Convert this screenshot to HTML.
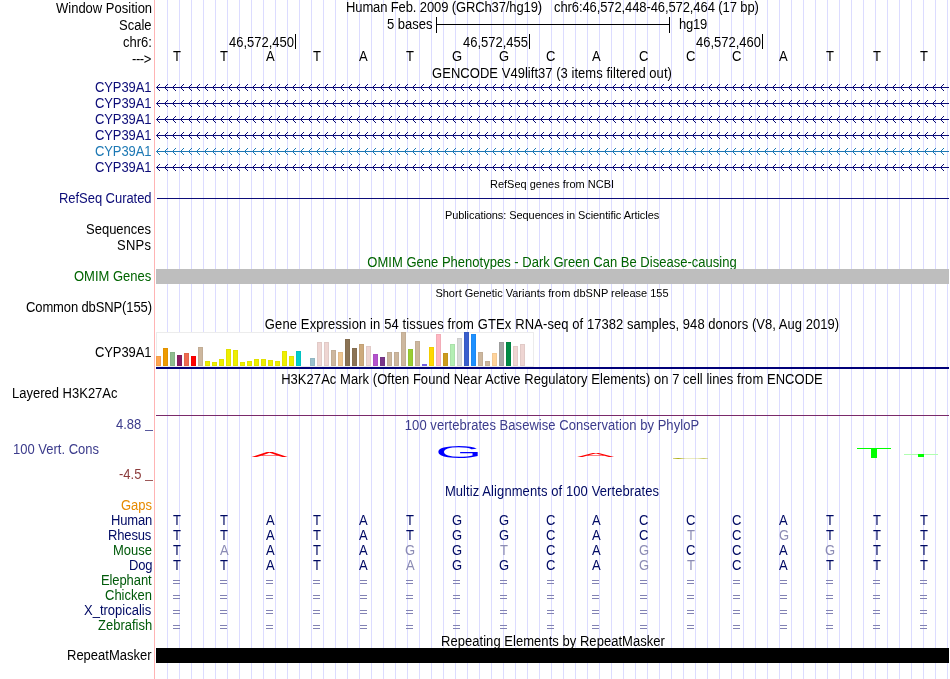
<!DOCTYPE html><html><head><meta charset="utf-8"><title>UCSC Genome Browser</title><style>
html,body{margin:0;padding:0;background:#fff;}
body{width:950px;height:679px;position:relative;overflow:hidden;font-family:"Liberation Sans", sans-serif;}
.t{position:absolute;white-space:pre;font-size:13px;line-height:16px;height:16px;transform:scaleY(1.06);transform-origin:0 12.5px;will-change:transform;}
.b{position:absolute;}
svg{position:absolute;left:0;top:0;}
</style></head><body>
<svg width="950" height="679" shape-rendering="crispEdges"><g fill="#dcdcff"><rect x="167" y="0" width="1" height="679"/><rect x="179" y="0" width="1" height="679"/><rect x="191" y="0" width="1" height="679"/><rect x="203" y="0" width="1" height="679"/><rect x="215" y="0" width="1" height="679"/><rect x="227" y="0" width="1" height="679"/><rect x="239" y="0" width="1" height="679"/><rect x="251" y="0" width="1" height="679"/><rect x="263" y="0" width="1" height="679"/><rect x="275" y="0" width="1" height="679"/><rect x="287" y="0" width="1" height="679"/><rect x="299" y="0" width="1" height="679"/><rect x="311" y="0" width="1" height="679"/><rect x="323" y="0" width="1" height="679"/><rect x="335" y="0" width="1" height="679"/><rect x="347" y="0" width="1" height="679"/><rect x="359" y="0" width="1" height="679"/><rect x="371" y="0" width="1" height="679"/><rect x="383" y="0" width="1" height="679"/><rect x="395" y="0" width="1" height="679"/><rect x="407" y="0" width="1" height="679"/><rect x="419" y="0" width="1" height="679"/><rect x="431" y="0" width="1" height="679"/><rect x="443" y="0" width="1" height="679"/><rect x="455" y="0" width="1" height="679"/><rect x="467" y="0" width="1" height="679"/><rect x="479" y="0" width="1" height="679"/><rect x="491" y="0" width="1" height="679"/><rect x="503" y="0" width="1" height="679"/><rect x="515" y="0" width="1" height="679"/><rect x="527" y="0" width="1" height="679"/><rect x="539" y="0" width="1" height="679"/><rect x="551" y="0" width="1" height="679"/><rect x="563" y="0" width="1" height="679"/><rect x="575" y="0" width="1" height="679"/><rect x="587" y="0" width="1" height="679"/><rect x="599" y="0" width="1" height="679"/><rect x="611" y="0" width="1" height="679"/><rect x="623" y="0" width="1" height="679"/><rect x="635" y="0" width="1" height="679"/><rect x="647" y="0" width="1" height="679"/><rect x="659" y="0" width="1" height="679"/><rect x="671" y="0" width="1" height="679"/><rect x="683" y="0" width="1" height="679"/><rect x="695" y="0" width="1" height="679"/><rect x="707" y="0" width="1" height="679"/><rect x="719" y="0" width="1" height="679"/><rect x="731" y="0" width="1" height="679"/><rect x="743" y="0" width="1" height="679"/><rect x="755" y="0" width="1" height="679"/><rect x="767" y="0" width="1" height="679"/><rect x="779" y="0" width="1" height="679"/><rect x="791" y="0" width="1" height="679"/><rect x="803" y="0" width="1" height="679"/><rect x="815" y="0" width="1" height="679"/><rect x="827" y="0" width="1" height="679"/><rect x="839" y="0" width="1" height="679"/><rect x="851" y="0" width="1" height="679"/><rect x="863" y="0" width="1" height="679"/><rect x="875" y="0" width="1" height="679"/><rect x="887" y="0" width="1" height="679"/><rect x="899" y="0" width="1" height="679"/><rect x="911" y="0" width="1" height="679"/><rect x="923" y="0" width="1" height="679"/><rect x="935" y="0" width="1" height="679"/><rect x="947" y="0" width="1" height="679"/></g>
<rect x="154" y="0" width="1" height="679" fill="#ffb4b4"/>
</svg>
<div class="t" style="right:798.00px;top:1px;color:#000;">Window Position</div>
<div class="t" style="right:798.00px;top:18px;color:#000;">Scale</div>
<div class="t" style="right:798.00px;top:35px;color:#000;">chr6:</div>
<div class="t" style="right:799.40px;top:52px;color:#000;letter-spacing:-0.4px;">---&gt;</div>
<div class="t" style="left:346px;top:0px;color:#000;letter-spacing:-0.12px;">Human Feb. 2009 (GRCh37/hg19)</div>
<div class="t" style="left:554.2px;top:0px;color:#000;letter-spacing:-0.1px;">chr6:46,572,448-46,572,464 (17 bp)</div>
<div class="t" style="right:517.00px;top:17px;color:#000;">5 bases</div>
<div class="t" style="left:678.8px;top:17px;color:#000;letter-spacing:-0.2px;">hg19</div>
<div class="b" style="left:436px;top:24px;width:234px;height:1px;background:#000"></div>
<div class="b" style="left:436px;top:17px;width:1px;height:16px;background:#000"></div>
<div class="b" style="left:669px;top:17px;width:1px;height:16px;background:#000"></div>
<div class="t" style="right:656.00px;top:35px;color:#000;">46,572,450</div>
<div class="b" style="left:295px;top:34px;width:1px;height:15px;background:#000"></div>
<div class="t" style="right:422.00px;top:35px;color:#000;">46,572,455</div>
<div class="b" style="left:529px;top:34px;width:1px;height:15px;background:#000"></div>
<div class="t" style="right:189.00px;top:35px;color:#000;">46,572,460</div>
<div class="b" style="left:762px;top:34px;width:1px;height:15px;background:#000"></div>
<div class="t" style="left:173px;top:49px;color:#000;">T</div>
<div class="t" style="left:220px;top:49px;color:#000;">T</div>
<div class="t" style="left:266px;top:49px;color:#000;">A</div>
<div class="t" style="left:313px;top:49px;color:#000;">T</div>
<div class="t" style="left:359px;top:49px;color:#000;">A</div>
<div class="t" style="left:406px;top:49px;color:#000;">T</div>
<div class="t" style="left:452px;top:49px;color:#000;">G</div>
<div class="t" style="left:499px;top:49px;color:#000;">G</div>
<div class="t" style="left:546px;top:49px;color:#000;">C</div>
<div class="t" style="left:592px;top:49px;color:#000;">A</div>
<div class="t" style="left:639px;top:49px;color:#000;">C</div>
<div class="t" style="left:686px;top:49px;color:#000;">C</div>
<div class="t" style="left:732px;top:49px;color:#000;">C</div>
<div class="t" style="left:779px;top:49px;color:#000;">A</div>
<div class="t" style="left:826px;top:49px;color:#000;">T</div>
<div class="t" style="left:873px;top:49px;color:#000;">T</div>
<div class="t" style="left:920px;top:49px;color:#000;">T</div>
<div class="t" style="left:152.12px;width:800px;text-align:center;top:66px;color:#000;letter-spacing:0.035px;">GENCODE V49lift37 (3 items filtered out)</div>
<div class="t" style="right:799.10px;top:80px;color:#0c0c78;letter-spacing:-0.1px;">CYP39A1</div>
<div class="t" style="right:799.10px;top:96px;color:#0c0c78;letter-spacing:-0.1px;">CYP39A1</div>
<div class="t" style="right:799.10px;top:112px;color:#0c0c78;letter-spacing:-0.1px;">CYP39A1</div>
<div class="t" style="right:799.10px;top:128px;color:#0c0c78;letter-spacing:-0.1px;">CYP39A1</div>
<div class="t" style="right:799.10px;top:144px;color:#1c78b4;letter-spacing:-0.1px;">CYP39A1</div>
<div class="t" style="right:799.10px;top:160px;color:#0c0c78;letter-spacing:-0.1px;">CYP39A1</div>
<svg width="950" height="679"><g stroke="#0c0c78" fill="none" stroke-width="1"><path d="M156.5 87.5H949"/><path d="M160.0 84L156.5 87.5L160.0 91M168.0 84L164.5 87.5L168.0 91M176.0 84L172.5 87.5L176.0 91M184.0 84L180.5 87.5L184.0 91M192.0 84L188.5 87.5L192.0 91M200.0 84L196.5 87.5L200.0 91M208.0 84L204.5 87.5L208.0 91M216.0 84L212.5 87.5L216.0 91M224.0 84L220.5 87.5L224.0 91M232.0 84L228.5 87.5L232.0 91M240.0 84L236.5 87.5L240.0 91M248.0 84L244.5 87.5L248.0 91M256.0 84L252.5 87.5L256.0 91M264.0 84L260.5 87.5L264.0 91M272.0 84L268.5 87.5L272.0 91M280.0 84L276.5 87.5L280.0 91M288.0 84L284.5 87.5L288.0 91M296.0 84L292.5 87.5L296.0 91M304.0 84L300.5 87.5L304.0 91M312.0 84L308.5 87.5L312.0 91M320.0 84L316.5 87.5L320.0 91M328.0 84L324.5 87.5L328.0 91M336.0 84L332.5 87.5L336.0 91M344.0 84L340.5 87.5L344.0 91M352.0 84L348.5 87.5L352.0 91M360.0 84L356.5 87.5L360.0 91M368.0 84L364.5 87.5L368.0 91M376.0 84L372.5 87.5L376.0 91M384.0 84L380.5 87.5L384.0 91M392.0 84L388.5 87.5L392.0 91M400.0 84L396.5 87.5L400.0 91M408.0 84L404.5 87.5L408.0 91M416.0 84L412.5 87.5L416.0 91M424.0 84L420.5 87.5L424.0 91M432.0 84L428.5 87.5L432.0 91M440.0 84L436.5 87.5L440.0 91M448.0 84L444.5 87.5L448.0 91M456.0 84L452.5 87.5L456.0 91M464.0 84L460.5 87.5L464.0 91M472.0 84L468.5 87.5L472.0 91M480.0 84L476.5 87.5L480.0 91M488.0 84L484.5 87.5L488.0 91M496.0 84L492.5 87.5L496.0 91M504.0 84L500.5 87.5L504.0 91M512.0 84L508.5 87.5L512.0 91M520.0 84L516.5 87.5L520.0 91M528.0 84L524.5 87.5L528.0 91M536.0 84L532.5 87.5L536.0 91M544.0 84L540.5 87.5L544.0 91M552.0 84L548.5 87.5L552.0 91M560.0 84L556.5 87.5L560.0 91M568.0 84L564.5 87.5L568.0 91M576.0 84L572.5 87.5L576.0 91M584.0 84L580.5 87.5L584.0 91M592.0 84L588.5 87.5L592.0 91M600.0 84L596.5 87.5L600.0 91M608.0 84L604.5 87.5L608.0 91M616.0 84L612.5 87.5L616.0 91M624.0 84L620.5 87.5L624.0 91M632.0 84L628.5 87.5L632.0 91M640.0 84L636.5 87.5L640.0 91M648.0 84L644.5 87.5L648.0 91M656.0 84L652.5 87.5L656.0 91M664.0 84L660.5 87.5L664.0 91M672.0 84L668.5 87.5L672.0 91M680.0 84L676.5 87.5L680.0 91M688.0 84L684.5 87.5L688.0 91M696.0 84L692.5 87.5L696.0 91M704.0 84L700.5 87.5L704.0 91M712.0 84L708.5 87.5L712.0 91M720.0 84L716.5 87.5L720.0 91M728.0 84L724.5 87.5L728.0 91M736.0 84L732.5 87.5L736.0 91M744.0 84L740.5 87.5L744.0 91M752.0 84L748.5 87.5L752.0 91M760.0 84L756.5 87.5L760.0 91M768.0 84L764.5 87.5L768.0 91M776.0 84L772.5 87.5L776.0 91M784.0 84L780.5 87.5L784.0 91M792.0 84L788.5 87.5L792.0 91M800.0 84L796.5 87.5L800.0 91M808.0 84L804.5 87.5L808.0 91M816.0 84L812.5 87.5L816.0 91M824.0 84L820.5 87.5L824.0 91M832.0 84L828.5 87.5L832.0 91M840.0 84L836.5 87.5L840.0 91M848.0 84L844.5 87.5L848.0 91M856.0 84L852.5 87.5L856.0 91M864.0 84L860.5 87.5L864.0 91M872.0 84L868.5 87.5L872.0 91M880.0 84L876.5 87.5L880.0 91M888.0 84L884.5 87.5L888.0 91M896.0 84L892.5 87.5L896.0 91M904.0 84L900.5 87.5L904.0 91M912.0 84L908.5 87.5L912.0 91M920.0 84L916.5 87.5L920.0 91M928.0 84L924.5 87.5L928.0 91M936.0 84L932.5 87.5L936.0 91M944.0 84L940.5 87.5L944.0 91"/></g><g stroke="#0c0c78" fill="none" stroke-width="1"><path d="M156.5 103.5H949"/><path d="M160.0 100L156.5 103.5L160.0 107M168.0 100L164.5 103.5L168.0 107M176.0 100L172.5 103.5L176.0 107M184.0 100L180.5 103.5L184.0 107M192.0 100L188.5 103.5L192.0 107M200.0 100L196.5 103.5L200.0 107M208.0 100L204.5 103.5L208.0 107M216.0 100L212.5 103.5L216.0 107M224.0 100L220.5 103.5L224.0 107M232.0 100L228.5 103.5L232.0 107M240.0 100L236.5 103.5L240.0 107M248.0 100L244.5 103.5L248.0 107M256.0 100L252.5 103.5L256.0 107M264.0 100L260.5 103.5L264.0 107M272.0 100L268.5 103.5L272.0 107M280.0 100L276.5 103.5L280.0 107M288.0 100L284.5 103.5L288.0 107M296.0 100L292.5 103.5L296.0 107M304.0 100L300.5 103.5L304.0 107M312.0 100L308.5 103.5L312.0 107M320.0 100L316.5 103.5L320.0 107M328.0 100L324.5 103.5L328.0 107M336.0 100L332.5 103.5L336.0 107M344.0 100L340.5 103.5L344.0 107M352.0 100L348.5 103.5L352.0 107M360.0 100L356.5 103.5L360.0 107M368.0 100L364.5 103.5L368.0 107M376.0 100L372.5 103.5L376.0 107M384.0 100L380.5 103.5L384.0 107M392.0 100L388.5 103.5L392.0 107M400.0 100L396.5 103.5L400.0 107M408.0 100L404.5 103.5L408.0 107M416.0 100L412.5 103.5L416.0 107M424.0 100L420.5 103.5L424.0 107M432.0 100L428.5 103.5L432.0 107M440.0 100L436.5 103.5L440.0 107M448.0 100L444.5 103.5L448.0 107M456.0 100L452.5 103.5L456.0 107M464.0 100L460.5 103.5L464.0 107M472.0 100L468.5 103.5L472.0 107M480.0 100L476.5 103.5L480.0 107M488.0 100L484.5 103.5L488.0 107M496.0 100L492.5 103.5L496.0 107M504.0 100L500.5 103.5L504.0 107M512.0 100L508.5 103.5L512.0 107M520.0 100L516.5 103.5L520.0 107M528.0 100L524.5 103.5L528.0 107M536.0 100L532.5 103.5L536.0 107M544.0 100L540.5 103.5L544.0 107M552.0 100L548.5 103.5L552.0 107M560.0 100L556.5 103.5L560.0 107M568.0 100L564.5 103.5L568.0 107M576.0 100L572.5 103.5L576.0 107M584.0 100L580.5 103.5L584.0 107M592.0 100L588.5 103.5L592.0 107M600.0 100L596.5 103.5L600.0 107M608.0 100L604.5 103.5L608.0 107M616.0 100L612.5 103.5L616.0 107M624.0 100L620.5 103.5L624.0 107M632.0 100L628.5 103.5L632.0 107M640.0 100L636.5 103.5L640.0 107M648.0 100L644.5 103.5L648.0 107M656.0 100L652.5 103.5L656.0 107M664.0 100L660.5 103.5L664.0 107M672.0 100L668.5 103.5L672.0 107M680.0 100L676.5 103.5L680.0 107M688.0 100L684.5 103.5L688.0 107M696.0 100L692.5 103.5L696.0 107M704.0 100L700.5 103.5L704.0 107M712.0 100L708.5 103.5L712.0 107M720.0 100L716.5 103.5L720.0 107M728.0 100L724.5 103.5L728.0 107M736.0 100L732.5 103.5L736.0 107M744.0 100L740.5 103.5L744.0 107M752.0 100L748.5 103.5L752.0 107M760.0 100L756.5 103.5L760.0 107M768.0 100L764.5 103.5L768.0 107M776.0 100L772.5 103.5L776.0 107M784.0 100L780.5 103.5L784.0 107M792.0 100L788.5 103.5L792.0 107M800.0 100L796.5 103.5L800.0 107M808.0 100L804.5 103.5L808.0 107M816.0 100L812.5 103.5L816.0 107M824.0 100L820.5 103.5L824.0 107M832.0 100L828.5 103.5L832.0 107M840.0 100L836.5 103.5L840.0 107M848.0 100L844.5 103.5L848.0 107M856.0 100L852.5 103.5L856.0 107M864.0 100L860.5 103.5L864.0 107M872.0 100L868.5 103.5L872.0 107M880.0 100L876.5 103.5L880.0 107M888.0 100L884.5 103.5L888.0 107M896.0 100L892.5 103.5L896.0 107M904.0 100L900.5 103.5L904.0 107M912.0 100L908.5 103.5L912.0 107M920.0 100L916.5 103.5L920.0 107M928.0 100L924.5 103.5L928.0 107M936.0 100L932.5 103.5L936.0 107M944.0 100L940.5 103.5L944.0 107"/></g><g stroke="#0c0c78" fill="none" stroke-width="1"><path d="M156.5 119.5H949"/><path d="M160.0 116L156.5 119.5L160.0 123M168.0 116L164.5 119.5L168.0 123M176.0 116L172.5 119.5L176.0 123M184.0 116L180.5 119.5L184.0 123M192.0 116L188.5 119.5L192.0 123M200.0 116L196.5 119.5L200.0 123M208.0 116L204.5 119.5L208.0 123M216.0 116L212.5 119.5L216.0 123M224.0 116L220.5 119.5L224.0 123M232.0 116L228.5 119.5L232.0 123M240.0 116L236.5 119.5L240.0 123M248.0 116L244.5 119.5L248.0 123M256.0 116L252.5 119.5L256.0 123M264.0 116L260.5 119.5L264.0 123M272.0 116L268.5 119.5L272.0 123M280.0 116L276.5 119.5L280.0 123M288.0 116L284.5 119.5L288.0 123M296.0 116L292.5 119.5L296.0 123M304.0 116L300.5 119.5L304.0 123M312.0 116L308.5 119.5L312.0 123M320.0 116L316.5 119.5L320.0 123M328.0 116L324.5 119.5L328.0 123M336.0 116L332.5 119.5L336.0 123M344.0 116L340.5 119.5L344.0 123M352.0 116L348.5 119.5L352.0 123M360.0 116L356.5 119.5L360.0 123M368.0 116L364.5 119.5L368.0 123M376.0 116L372.5 119.5L376.0 123M384.0 116L380.5 119.5L384.0 123M392.0 116L388.5 119.5L392.0 123M400.0 116L396.5 119.5L400.0 123M408.0 116L404.5 119.5L408.0 123M416.0 116L412.5 119.5L416.0 123M424.0 116L420.5 119.5L424.0 123M432.0 116L428.5 119.5L432.0 123M440.0 116L436.5 119.5L440.0 123M448.0 116L444.5 119.5L448.0 123M456.0 116L452.5 119.5L456.0 123M464.0 116L460.5 119.5L464.0 123M472.0 116L468.5 119.5L472.0 123M480.0 116L476.5 119.5L480.0 123M488.0 116L484.5 119.5L488.0 123M496.0 116L492.5 119.5L496.0 123M504.0 116L500.5 119.5L504.0 123M512.0 116L508.5 119.5L512.0 123M520.0 116L516.5 119.5L520.0 123M528.0 116L524.5 119.5L528.0 123M536.0 116L532.5 119.5L536.0 123M544.0 116L540.5 119.5L544.0 123M552.0 116L548.5 119.5L552.0 123M560.0 116L556.5 119.5L560.0 123M568.0 116L564.5 119.5L568.0 123M576.0 116L572.5 119.5L576.0 123M584.0 116L580.5 119.5L584.0 123M592.0 116L588.5 119.5L592.0 123M600.0 116L596.5 119.5L600.0 123M608.0 116L604.5 119.5L608.0 123M616.0 116L612.5 119.5L616.0 123M624.0 116L620.5 119.5L624.0 123M632.0 116L628.5 119.5L632.0 123M640.0 116L636.5 119.5L640.0 123M648.0 116L644.5 119.5L648.0 123M656.0 116L652.5 119.5L656.0 123M664.0 116L660.5 119.5L664.0 123M672.0 116L668.5 119.5L672.0 123M680.0 116L676.5 119.5L680.0 123M688.0 116L684.5 119.5L688.0 123M696.0 116L692.5 119.5L696.0 123M704.0 116L700.5 119.5L704.0 123M712.0 116L708.5 119.5L712.0 123M720.0 116L716.5 119.5L720.0 123M728.0 116L724.5 119.5L728.0 123M736.0 116L732.5 119.5L736.0 123M744.0 116L740.5 119.5L744.0 123M752.0 116L748.5 119.5L752.0 123M760.0 116L756.5 119.5L760.0 123M768.0 116L764.5 119.5L768.0 123M776.0 116L772.5 119.5L776.0 123M784.0 116L780.5 119.5L784.0 123M792.0 116L788.5 119.5L792.0 123M800.0 116L796.5 119.5L800.0 123M808.0 116L804.5 119.5L808.0 123M816.0 116L812.5 119.5L816.0 123M824.0 116L820.5 119.5L824.0 123M832.0 116L828.5 119.5L832.0 123M840.0 116L836.5 119.5L840.0 123M848.0 116L844.5 119.5L848.0 123M856.0 116L852.5 119.5L856.0 123M864.0 116L860.5 119.5L864.0 123M872.0 116L868.5 119.5L872.0 123M880.0 116L876.5 119.5L880.0 123M888.0 116L884.5 119.5L888.0 123M896.0 116L892.5 119.5L896.0 123M904.0 116L900.5 119.5L904.0 123M912.0 116L908.5 119.5L912.0 123M920.0 116L916.5 119.5L920.0 123M928.0 116L924.5 119.5L928.0 123M936.0 116L932.5 119.5L936.0 123M944.0 116L940.5 119.5L944.0 123"/></g><g stroke="#0c0c78" fill="none" stroke-width="1"><path d="M156.5 135.5H949"/><path d="M160.0 132L156.5 135.5L160.0 139M168.0 132L164.5 135.5L168.0 139M176.0 132L172.5 135.5L176.0 139M184.0 132L180.5 135.5L184.0 139M192.0 132L188.5 135.5L192.0 139M200.0 132L196.5 135.5L200.0 139M208.0 132L204.5 135.5L208.0 139M216.0 132L212.5 135.5L216.0 139M224.0 132L220.5 135.5L224.0 139M232.0 132L228.5 135.5L232.0 139M240.0 132L236.5 135.5L240.0 139M248.0 132L244.5 135.5L248.0 139M256.0 132L252.5 135.5L256.0 139M264.0 132L260.5 135.5L264.0 139M272.0 132L268.5 135.5L272.0 139M280.0 132L276.5 135.5L280.0 139M288.0 132L284.5 135.5L288.0 139M296.0 132L292.5 135.5L296.0 139M304.0 132L300.5 135.5L304.0 139M312.0 132L308.5 135.5L312.0 139M320.0 132L316.5 135.5L320.0 139M328.0 132L324.5 135.5L328.0 139M336.0 132L332.5 135.5L336.0 139M344.0 132L340.5 135.5L344.0 139M352.0 132L348.5 135.5L352.0 139M360.0 132L356.5 135.5L360.0 139M368.0 132L364.5 135.5L368.0 139M376.0 132L372.5 135.5L376.0 139M384.0 132L380.5 135.5L384.0 139M392.0 132L388.5 135.5L392.0 139M400.0 132L396.5 135.5L400.0 139M408.0 132L404.5 135.5L408.0 139M416.0 132L412.5 135.5L416.0 139M424.0 132L420.5 135.5L424.0 139M432.0 132L428.5 135.5L432.0 139M440.0 132L436.5 135.5L440.0 139M448.0 132L444.5 135.5L448.0 139M456.0 132L452.5 135.5L456.0 139M464.0 132L460.5 135.5L464.0 139M472.0 132L468.5 135.5L472.0 139M480.0 132L476.5 135.5L480.0 139M488.0 132L484.5 135.5L488.0 139M496.0 132L492.5 135.5L496.0 139M504.0 132L500.5 135.5L504.0 139M512.0 132L508.5 135.5L512.0 139M520.0 132L516.5 135.5L520.0 139M528.0 132L524.5 135.5L528.0 139M536.0 132L532.5 135.5L536.0 139M544.0 132L540.5 135.5L544.0 139M552.0 132L548.5 135.5L552.0 139M560.0 132L556.5 135.5L560.0 139M568.0 132L564.5 135.5L568.0 139M576.0 132L572.5 135.5L576.0 139M584.0 132L580.5 135.5L584.0 139M592.0 132L588.5 135.5L592.0 139M600.0 132L596.5 135.5L600.0 139M608.0 132L604.5 135.5L608.0 139M616.0 132L612.5 135.5L616.0 139M624.0 132L620.5 135.5L624.0 139M632.0 132L628.5 135.5L632.0 139M640.0 132L636.5 135.5L640.0 139M648.0 132L644.5 135.5L648.0 139M656.0 132L652.5 135.5L656.0 139M664.0 132L660.5 135.5L664.0 139M672.0 132L668.5 135.5L672.0 139M680.0 132L676.5 135.5L680.0 139M688.0 132L684.5 135.5L688.0 139M696.0 132L692.5 135.5L696.0 139M704.0 132L700.5 135.5L704.0 139M712.0 132L708.5 135.5L712.0 139M720.0 132L716.5 135.5L720.0 139M728.0 132L724.5 135.5L728.0 139M736.0 132L732.5 135.5L736.0 139M744.0 132L740.5 135.5L744.0 139M752.0 132L748.5 135.5L752.0 139M760.0 132L756.5 135.5L760.0 139M768.0 132L764.5 135.5L768.0 139M776.0 132L772.5 135.5L776.0 139M784.0 132L780.5 135.5L784.0 139M792.0 132L788.5 135.5L792.0 139M800.0 132L796.5 135.5L800.0 139M808.0 132L804.5 135.5L808.0 139M816.0 132L812.5 135.5L816.0 139M824.0 132L820.5 135.5L824.0 139M832.0 132L828.5 135.5L832.0 139M840.0 132L836.5 135.5L840.0 139M848.0 132L844.5 135.5L848.0 139M856.0 132L852.5 135.5L856.0 139M864.0 132L860.5 135.5L864.0 139M872.0 132L868.5 135.5L872.0 139M880.0 132L876.5 135.5L880.0 139M888.0 132L884.5 135.5L888.0 139M896.0 132L892.5 135.5L896.0 139M904.0 132L900.5 135.5L904.0 139M912.0 132L908.5 135.5L912.0 139M920.0 132L916.5 135.5L920.0 139M928.0 132L924.5 135.5L928.0 139M936.0 132L932.5 135.5L936.0 139M944.0 132L940.5 135.5L944.0 139"/></g><g stroke="#1c78b4" fill="none" stroke-width="1"><path d="M156.5 151.5H949"/><path d="M160.0 148L156.5 151.5L160.0 155M168.0 148L164.5 151.5L168.0 155M176.0 148L172.5 151.5L176.0 155M184.0 148L180.5 151.5L184.0 155M192.0 148L188.5 151.5L192.0 155M200.0 148L196.5 151.5L200.0 155M208.0 148L204.5 151.5L208.0 155M216.0 148L212.5 151.5L216.0 155M224.0 148L220.5 151.5L224.0 155M232.0 148L228.5 151.5L232.0 155M240.0 148L236.5 151.5L240.0 155M248.0 148L244.5 151.5L248.0 155M256.0 148L252.5 151.5L256.0 155M264.0 148L260.5 151.5L264.0 155M272.0 148L268.5 151.5L272.0 155M280.0 148L276.5 151.5L280.0 155M288.0 148L284.5 151.5L288.0 155M296.0 148L292.5 151.5L296.0 155M304.0 148L300.5 151.5L304.0 155M312.0 148L308.5 151.5L312.0 155M320.0 148L316.5 151.5L320.0 155M328.0 148L324.5 151.5L328.0 155M336.0 148L332.5 151.5L336.0 155M344.0 148L340.5 151.5L344.0 155M352.0 148L348.5 151.5L352.0 155M360.0 148L356.5 151.5L360.0 155M368.0 148L364.5 151.5L368.0 155M376.0 148L372.5 151.5L376.0 155M384.0 148L380.5 151.5L384.0 155M392.0 148L388.5 151.5L392.0 155M400.0 148L396.5 151.5L400.0 155M408.0 148L404.5 151.5L408.0 155M416.0 148L412.5 151.5L416.0 155M424.0 148L420.5 151.5L424.0 155M432.0 148L428.5 151.5L432.0 155M440.0 148L436.5 151.5L440.0 155M448.0 148L444.5 151.5L448.0 155M456.0 148L452.5 151.5L456.0 155M464.0 148L460.5 151.5L464.0 155M472.0 148L468.5 151.5L472.0 155M480.0 148L476.5 151.5L480.0 155M488.0 148L484.5 151.5L488.0 155M496.0 148L492.5 151.5L496.0 155M504.0 148L500.5 151.5L504.0 155M512.0 148L508.5 151.5L512.0 155M520.0 148L516.5 151.5L520.0 155M528.0 148L524.5 151.5L528.0 155M536.0 148L532.5 151.5L536.0 155M544.0 148L540.5 151.5L544.0 155M552.0 148L548.5 151.5L552.0 155M560.0 148L556.5 151.5L560.0 155M568.0 148L564.5 151.5L568.0 155M576.0 148L572.5 151.5L576.0 155M584.0 148L580.5 151.5L584.0 155M592.0 148L588.5 151.5L592.0 155M600.0 148L596.5 151.5L600.0 155M608.0 148L604.5 151.5L608.0 155M616.0 148L612.5 151.5L616.0 155M624.0 148L620.5 151.5L624.0 155M632.0 148L628.5 151.5L632.0 155M640.0 148L636.5 151.5L640.0 155M648.0 148L644.5 151.5L648.0 155M656.0 148L652.5 151.5L656.0 155M664.0 148L660.5 151.5L664.0 155M672.0 148L668.5 151.5L672.0 155M680.0 148L676.5 151.5L680.0 155M688.0 148L684.5 151.5L688.0 155M696.0 148L692.5 151.5L696.0 155M704.0 148L700.5 151.5L704.0 155M712.0 148L708.5 151.5L712.0 155M720.0 148L716.5 151.5L720.0 155M728.0 148L724.5 151.5L728.0 155M736.0 148L732.5 151.5L736.0 155M744.0 148L740.5 151.5L744.0 155M752.0 148L748.5 151.5L752.0 155M760.0 148L756.5 151.5L760.0 155M768.0 148L764.5 151.5L768.0 155M776.0 148L772.5 151.5L776.0 155M784.0 148L780.5 151.5L784.0 155M792.0 148L788.5 151.5L792.0 155M800.0 148L796.5 151.5L800.0 155M808.0 148L804.5 151.5L808.0 155M816.0 148L812.5 151.5L816.0 155M824.0 148L820.5 151.5L824.0 155M832.0 148L828.5 151.5L832.0 155M840.0 148L836.5 151.5L840.0 155M848.0 148L844.5 151.5L848.0 155M856.0 148L852.5 151.5L856.0 155M864.0 148L860.5 151.5L864.0 155M872.0 148L868.5 151.5L872.0 155M880.0 148L876.5 151.5L880.0 155M888.0 148L884.5 151.5L888.0 155M896.0 148L892.5 151.5L896.0 155M904.0 148L900.5 151.5L904.0 155M912.0 148L908.5 151.5L912.0 155M920.0 148L916.5 151.5L920.0 155M928.0 148L924.5 151.5L928.0 155M936.0 148L932.5 151.5L936.0 155M944.0 148L940.5 151.5L944.0 155"/></g><g stroke="#0c0c78" fill="none" stroke-width="1"><path d="M156.5 167.5H949"/><path d="M160.0 164L156.5 167.5L160.0 171M168.0 164L164.5 167.5L168.0 171M176.0 164L172.5 167.5L176.0 171M184.0 164L180.5 167.5L184.0 171M192.0 164L188.5 167.5L192.0 171M200.0 164L196.5 167.5L200.0 171M208.0 164L204.5 167.5L208.0 171M216.0 164L212.5 167.5L216.0 171M224.0 164L220.5 167.5L224.0 171M232.0 164L228.5 167.5L232.0 171M240.0 164L236.5 167.5L240.0 171M248.0 164L244.5 167.5L248.0 171M256.0 164L252.5 167.5L256.0 171M264.0 164L260.5 167.5L264.0 171M272.0 164L268.5 167.5L272.0 171M280.0 164L276.5 167.5L280.0 171M288.0 164L284.5 167.5L288.0 171M296.0 164L292.5 167.5L296.0 171M304.0 164L300.5 167.5L304.0 171M312.0 164L308.5 167.5L312.0 171M320.0 164L316.5 167.5L320.0 171M328.0 164L324.5 167.5L328.0 171M336.0 164L332.5 167.5L336.0 171M344.0 164L340.5 167.5L344.0 171M352.0 164L348.5 167.5L352.0 171M360.0 164L356.5 167.5L360.0 171M368.0 164L364.5 167.5L368.0 171M376.0 164L372.5 167.5L376.0 171M384.0 164L380.5 167.5L384.0 171M392.0 164L388.5 167.5L392.0 171M400.0 164L396.5 167.5L400.0 171M408.0 164L404.5 167.5L408.0 171M416.0 164L412.5 167.5L416.0 171M424.0 164L420.5 167.5L424.0 171M432.0 164L428.5 167.5L432.0 171M440.0 164L436.5 167.5L440.0 171M448.0 164L444.5 167.5L448.0 171M456.0 164L452.5 167.5L456.0 171M464.0 164L460.5 167.5L464.0 171M472.0 164L468.5 167.5L472.0 171M480.0 164L476.5 167.5L480.0 171M488.0 164L484.5 167.5L488.0 171M496.0 164L492.5 167.5L496.0 171M504.0 164L500.5 167.5L504.0 171M512.0 164L508.5 167.5L512.0 171M520.0 164L516.5 167.5L520.0 171M528.0 164L524.5 167.5L528.0 171M536.0 164L532.5 167.5L536.0 171M544.0 164L540.5 167.5L544.0 171M552.0 164L548.5 167.5L552.0 171M560.0 164L556.5 167.5L560.0 171M568.0 164L564.5 167.5L568.0 171M576.0 164L572.5 167.5L576.0 171M584.0 164L580.5 167.5L584.0 171M592.0 164L588.5 167.5L592.0 171M600.0 164L596.5 167.5L600.0 171M608.0 164L604.5 167.5L608.0 171M616.0 164L612.5 167.5L616.0 171M624.0 164L620.5 167.5L624.0 171M632.0 164L628.5 167.5L632.0 171M640.0 164L636.5 167.5L640.0 171M648.0 164L644.5 167.5L648.0 171M656.0 164L652.5 167.5L656.0 171M664.0 164L660.5 167.5L664.0 171M672.0 164L668.5 167.5L672.0 171M680.0 164L676.5 167.5L680.0 171M688.0 164L684.5 167.5L688.0 171M696.0 164L692.5 167.5L696.0 171M704.0 164L700.5 167.5L704.0 171M712.0 164L708.5 167.5L712.0 171M720.0 164L716.5 167.5L720.0 171M728.0 164L724.5 167.5L728.0 171M736.0 164L732.5 167.5L736.0 171M744.0 164L740.5 167.5L744.0 171M752.0 164L748.5 167.5L752.0 171M760.0 164L756.5 167.5L760.0 171M768.0 164L764.5 167.5L768.0 171M776.0 164L772.5 167.5L776.0 171M784.0 164L780.5 167.5L784.0 171M792.0 164L788.5 167.5L792.0 171M800.0 164L796.5 167.5L800.0 171M808.0 164L804.5 167.5L808.0 171M816.0 164L812.5 167.5L816.0 171M824.0 164L820.5 167.5L824.0 171M832.0 164L828.5 167.5L832.0 171M840.0 164L836.5 167.5L840.0 171M848.0 164L844.5 167.5L848.0 171M856.0 164L852.5 167.5L856.0 171M864.0 164L860.5 167.5L864.0 171M872.0 164L868.5 167.5L872.0 171M880.0 164L876.5 167.5L880.0 171M888.0 164L884.5 167.5L888.0 171M896.0 164L892.5 167.5L896.0 171M904.0 164L900.5 167.5L904.0 171M912.0 164L908.5 167.5L912.0 171M920.0 164L916.5 167.5L920.0 171M928.0 164L924.5 167.5L928.0 171M936.0 164L932.5 167.5L936.0 171M944.0 164L940.5 167.5L944.0 171"/></g></svg>
<div class="t" style="left:152.10px;width:800px;text-align:center;top:176px;color:#000;font-size:11px;">RefSeq genes from NCBI</div>
<div class="t" style="right:798.35px;top:191px;color:#0c0c78;letter-spacing:-0.05px;">RefSeq Curated</div>
<div class="b" style="left:157px;top:198px;width:792px;height:1px;background:#0c0c78"></div>
<div class="t" style="left:152.01px;width:800px;text-align:center;top:207px;color:#000;letter-spacing:-0.075px;font-size:11px;">Publications: Sequences in Scientific Articles</div>
<div class="t" style="right:798.80px;top:222px;color:#000;">Sequences</div>
<div class="t" style="right:798.55px;top:238px;color:#000;letter-spacing:0.25px;">SNPs</div>
<div class="t" style="left:151.91px;width:800px;text-align:center;top:255px;color:#006400;letter-spacing:0.015px;">OMIM Gene Phenotypes - Dark Green Can Be Disease-causing</div>
<div class="t" style="right:798.80px;top:269px;color:#006400;">OMIM Genes</div>
<div class="b" style="left:156px;top:269px;width:793px;height:15px;background:#bebebe"></div>
<div class="t" style="left:151.60px;width:800px;text-align:center;top:285px;color:#000;font-size:11px;">Short Genetic Variants from dbSNP release 155</div>
<div class="t" style="right:798.32px;top:300px;color:#000;letter-spacing:-0.12px;">Common dbSNP(155)</div>
<div class="t" style="left:152.30px;width:800px;text-align:center;top:317px;color:#000;"><span style="letter-spacing:.116px">Gene Expression in 54 tissues from GTEx RNA-seq</span><span style="letter-spacing:.036px"> of 17382 samples, 948 donors (V8, Aug 2019)</span></div>
<div class="t" style="right:799.10px;top:345px;color:#000;letter-spacing:-0.1px;">CYP39A1</div>
<div class="b" style="left:156px;top:332px;width:378px;height:35px;background:#fff;border:1px solid #ececec;box-sizing:border-box"></div>
<div class="b" style="left:156px;top:356px;width:5px;height:10px;background:#FFA54F;box-shadow:inset 0 0 0 1px rgba(0,0,0,.05)"></div>
<div class="b" style="left:163px;top:348px;width:5px;height:18px;background:#EE9A00;box-shadow:inset 0 0 0 1px rgba(0,0,0,.05)"></div>
<div class="b" style="left:170px;top:352px;width:5px;height:14px;background:#8FBC8F;box-shadow:inset 0 0 0 1px rgba(0,0,0,.05)"></div>
<div class="b" style="left:177px;top:355px;width:5px;height:11px;background:#8B1C62;box-shadow:inset 0 0 0 1px rgba(0,0,0,.05)"></div>
<div class="b" style="left:184px;top:353px;width:5px;height:13px;background:#EE6A50;box-shadow:inset 0 0 0 1px rgba(0,0,0,.05)"></div>
<div class="b" style="left:191px;top:356px;width:5px;height:10px;background:#FF0000;box-shadow:inset 0 0 0 1px rgba(0,0,0,.05)"></div>
<div class="b" style="left:198px;top:347px;width:5px;height:19px;background:#CDB79E;box-shadow:inset 0 0 0 1px rgba(0,0,0,.05)"></div>
<div class="b" style="left:205px;top:361px;width:5px;height:5px;background:#EEEE00;box-shadow:inset 0 0 0 1px rgba(0,0,0,.05)"></div>
<div class="b" style="left:212px;top:362px;width:5px;height:4px;background:#EEEE00;box-shadow:inset 0 0 0 1px rgba(0,0,0,.05)"></div>
<div class="b" style="left:219px;top:359px;width:5px;height:7px;background:#EEEE00;box-shadow:inset 0 0 0 1px rgba(0,0,0,.05)"></div>
<div class="b" style="left:226px;top:349px;width:5px;height:17px;background:#EEEE00;box-shadow:inset 0 0 0 1px rgba(0,0,0,.05)"></div>
<div class="b" style="left:233px;top:350px;width:5px;height:16px;background:#EEEE00;box-shadow:inset 0 0 0 1px rgba(0,0,0,.05)"></div>
<div class="b" style="left:240px;top:362px;width:5px;height:4px;background:#EEEE00;box-shadow:inset 0 0 0 1px rgba(0,0,0,.05)"></div>
<div class="b" style="left:247px;top:361px;width:5px;height:5px;background:#EEEE00;box-shadow:inset 0 0 0 1px rgba(0,0,0,.05)"></div>
<div class="b" style="left:254px;top:359px;width:5px;height:7px;background:#EEEE00;box-shadow:inset 0 0 0 1px rgba(0,0,0,.05)"></div>
<div class="b" style="left:261px;top:359px;width:5px;height:7px;background:#EEEE00;box-shadow:inset 0 0 0 1px rgba(0,0,0,.05)"></div>
<div class="b" style="left:268px;top:360px;width:5px;height:6px;background:#EEEE00;box-shadow:inset 0 0 0 1px rgba(0,0,0,.05)"></div>
<div class="b" style="left:275px;top:361px;width:5px;height:5px;background:#EEEE00;box-shadow:inset 0 0 0 1px rgba(0,0,0,.05)"></div>
<div class="b" style="left:282px;top:351px;width:5px;height:15px;background:#EEEE00;box-shadow:inset 0 0 0 1px rgba(0,0,0,.05)"></div>
<div class="b" style="left:289px;top:356px;width:5px;height:10px;background:#EEEE00;box-shadow:inset 0 0 0 1px rgba(0,0,0,.05)"></div>
<div class="b" style="left:296px;top:351px;width:5px;height:15px;background:#00CDCD;box-shadow:inset 0 0 0 1px rgba(0,0,0,.05)"></div>
<div class="b" style="left:310px;top:358px;width:5px;height:8px;background:#9AC0CD;box-shadow:inset 0 0 0 1px rgba(0,0,0,.05)"></div>
<div class="b" style="left:317px;top:342px;width:5px;height:24px;background:#EED5D2;box-shadow:inset 0 0 0 1px rgba(0,0,0,.05)"></div>
<div class="b" style="left:324px;top:342px;width:5px;height:24px;background:#EED5D2;box-shadow:inset 0 0 0 1px rgba(0,0,0,.05)"></div>
<div class="b" style="left:331px;top:350px;width:5px;height:16px;background:#CDB79E;box-shadow:inset 0 0 0 1px rgba(0,0,0,.05)"></div>
<div class="b" style="left:338px;top:352px;width:5px;height:14px;background:#EEC591;box-shadow:inset 0 0 0 1px rgba(0,0,0,.05)"></div>
<div class="b" style="left:345px;top:339px;width:5px;height:27px;background:#8B7355;box-shadow:inset 0 0 0 1px rgba(0,0,0,.05)"></div>
<div class="b" style="left:352px;top:348px;width:5px;height:18px;background:#8B7355;box-shadow:inset 0 0 0 1px rgba(0,0,0,.05)"></div>
<div class="b" style="left:359px;top:344px;width:5px;height:22px;background:#CDAA7D;box-shadow:inset 0 0 0 1px rgba(0,0,0,.05)"></div>
<div class="b" style="left:366px;top:346px;width:5px;height:20px;background:#EED5D2;box-shadow:inset 0 0 0 1px rgba(0,0,0,.05)"></div>
<div class="b" style="left:373px;top:354px;width:5px;height:12px;background:#B452CD;box-shadow:inset 0 0 0 1px rgba(0,0,0,.05)"></div>
<div class="b" style="left:380px;top:357px;width:5px;height:9px;background:#7A378B;box-shadow:inset 0 0 0 1px rgba(0,0,0,.05)"></div>
<div class="b" style="left:387px;top:352px;width:5px;height:14px;background:#CDB79E;box-shadow:inset 0 0 0 1px rgba(0,0,0,.05)"></div>
<div class="b" style="left:394px;top:352px;width:5px;height:14px;background:#CDB79E;box-shadow:inset 0 0 0 1px rgba(0,0,0,.05)"></div>
<div class="b" style="left:401px;top:332px;width:5px;height:34px;background:#CDB79E;box-shadow:inset 0 0 0 1px rgba(0,0,0,.05)"></div>
<div class="b" style="left:408px;top:349px;width:5px;height:17px;background:#9ACD32;box-shadow:inset 0 0 0 1px rgba(0,0,0,.05)"></div>
<div class="b" style="left:415px;top:341px;width:5px;height:25px;background:#CDB79E;box-shadow:inset 0 0 0 1px rgba(0,0,0,.05)"></div>
<div class="b" style="left:422px;top:364px;width:5px;height:2px;background:#7A67EE;box-shadow:inset 0 0 0 1px rgba(0,0,0,.05)"></div>
<div class="b" style="left:429px;top:347px;width:5px;height:19px;background:#FFD700;box-shadow:inset 0 0 0 1px rgba(0,0,0,.05)"></div>
<div class="b" style="left:436px;top:334px;width:5px;height:32px;background:#FFB6C1;box-shadow:inset 0 0 0 1px rgba(0,0,0,.05)"></div>
<div class="b" style="left:443px;top:353px;width:5px;height:13px;background:#CD9B1D;box-shadow:inset 0 0 0 1px rgba(0,0,0,.05)"></div>
<div class="b" style="left:450px;top:344px;width:5px;height:22px;background:#B4EEB4;box-shadow:inset 0 0 0 1px rgba(0,0,0,.05)"></div>
<div class="b" style="left:457px;top:338px;width:5px;height:28px;background:#D9D9D9;box-shadow:inset 0 0 0 1px rgba(0,0,0,.05)"></div>
<div class="b" style="left:464px;top:332px;width:5px;height:34px;background:#3A5FCD;box-shadow:inset 0 0 0 1px rgba(0,0,0,.05)"></div>
<div class="b" style="left:471px;top:334px;width:5px;height:32px;background:#1E90FF;box-shadow:inset 0 0 0 1px rgba(0,0,0,.05)"></div>
<div class="b" style="left:478px;top:352px;width:5px;height:14px;background:#CDB79E;box-shadow:inset 0 0 0 1px rgba(0,0,0,.05)"></div>
<div class="b" style="left:485px;top:361px;width:5px;height:5px;background:#CDB79E;box-shadow:inset 0 0 0 1px rgba(0,0,0,.05)"></div>
<div class="b" style="left:492px;top:353px;width:5px;height:13px;background:#FFD39B;box-shadow:inset 0 0 0 1px rgba(0,0,0,.05)"></div>
<div class="b" style="left:499px;top:342px;width:5px;height:24px;background:#A6A6A6;box-shadow:inset 0 0 0 1px rgba(0,0,0,.05)"></div>
<div class="b" style="left:506px;top:342px;width:5px;height:24px;background:#008B45;box-shadow:inset 0 0 0 1px rgba(0,0,0,.05)"></div>
<div class="b" style="left:513px;top:346px;width:5px;height:20px;background:#EED5D2;box-shadow:inset 0 0 0 1px rgba(0,0,0,.05)"></div>
<div class="b" style="left:520px;top:344px;width:5px;height:22px;background:#EED5D2;box-shadow:inset 0 0 0 1px rgba(0,0,0,.05)"></div>
<div class="b" style="left:156px;top:367px;width:793px;height:2px;background:#000078"></div>
<div class="t" style="left:151.67px;width:800px;text-align:center;top:372px;color:#000;letter-spacing:0.048px;">H3K27Ac Mark (Often Found Near Active Regulatory Elements) on 7 cell lines from ENCODE</div>
<div class="t" style="left:12.3px;top:386px;color:#000;">Layered H3K27Ac</div>
<div class="b" style="left:156px;top:415px;width:793px;height:1px;background:#7a2a6a"></div>
<div class="t" style="left:151.98px;width:800px;text-align:center;top:418px;color:#3c3c8c;letter-spacing:0.05px;">100 vertebrates Basewise Conservation by PhyloP</div>
<div class="t" style="right:808.40px;top:417px;color:#3c3c8c;">4.88</div>
<div class="b" style="left:145px;top:430px;width:8px;height:1px;background:#3c3c8c;opacity:.85"></div>
<div class="t" style="left:12.6px;top:442px;color:#3c3c8c;">100 Vert. Cons</div>
<div class="t" style="right:808.40px;top:467px;color:#8c3c3c;">-4.5</div>
<div class="b" style="left:145px;top:480px;width:8px;height:1px;background:#8c3c3c;opacity:.85"></div>
<svg width="950" height="679" font-family='"Liberation Sans", sans-serif'><text transform="translate(251.39,457.30) scale(0.02651,0.00319)" font-size="2048" fill="#ff0000" fill-opacity="1">A</text><text transform="translate(435.26,458.04) scale(0.02947,0.00814)" font-size="2048" fill="#0000ff" fill-opacity="1">G</text><text transform="translate(576.89,457.30) scale(0.02725,0.00263)" font-size="2048" fill="#ff0000" fill-opacity="1">A</text></svg>
<div class="b" style="left:673px;top:458px;width:35px;height:1px;background:linear-gradient(to right,rgba(165,165,0,.45),rgba(165,165,0,.9) 15%,rgba(175,175,0,.25) 35%,rgba(175,175,0,.25) 70%,rgba(165,165,0,.6) 88%,rgba(165,165,0,.3))"></div>
<div class="b" style="left:857px;top:448px;width:34px;height:1px;background:#00ff00"></div>
<div class="b" style="left:871px;top:448px;width:6px;height:10px;background:#00ff00"></div>
<div class="b" style="left:904px;top:454px;width:34px;height:1px;background:#b0ffb0"></div>
<div class="b" style="left:918px;top:454px;width:6px;height:3px;background:#00ff00"></div>
<div class="t" style="left:152.15px;width:800px;text-align:center;top:484px;color:#000a64;letter-spacing:0.09px;">Multiz Alignments of 100 Vertebrates</div>
<div class="t" style="right:798.00px;top:498px;color:#e68a00;">Gaps</div>
<div class="t" style="right:798.15px;top:513px;color:#000a64;letter-spacing:-0.15px;">Human</div>
<div class="t" style="right:798.65px;top:528px;color:#000a64;letter-spacing:-0.15px;">Rhesus</div>
<div class="t" style="right:798.00px;top:543px;color:#005a0a;">Mouse</div>
<div class="t" style="right:797.65px;top:558px;color:#000a64;letter-spacing:-0.15px;">Dog</div>
<div class="t" style="right:798.80px;top:573px;color:#005a0a;letter-spacing:-0.1px;">Elephant</div>
<div class="t" style="right:797.70px;top:588px;color:#005a0a;">Chicken</div>
<div class="t" style="right:798.75px;top:603px;color:#000a64;">X_tropicalis</div>
<div class="t" style="right:798.00px;top:618px;color:#005a0a;">Zebrafish</div>
<div class="t" style="left:173px;top:513px;color:#000a64;">T</div>
<div class="t" style="left:220px;top:513px;color:#000a64;">T</div>
<div class="t" style="left:266px;top:513px;color:#000a64;">A</div>
<div class="t" style="left:313px;top:513px;color:#000a64;">T</div>
<div class="t" style="left:359px;top:513px;color:#000a64;">A</div>
<div class="t" style="left:406px;top:513px;color:#000a64;">T</div>
<div class="t" style="left:452px;top:513px;color:#000a64;">G</div>
<div class="t" style="left:499px;top:513px;color:#000a64;">G</div>
<div class="t" style="left:546px;top:513px;color:#000a64;">C</div>
<div class="t" style="left:592px;top:513px;color:#000a64;">A</div>
<div class="t" style="left:639px;top:513px;color:#000a64;">C</div>
<div class="t" style="left:686px;top:513px;color:#000a64;">C</div>
<div class="t" style="left:732px;top:513px;color:#000a64;">C</div>
<div class="t" style="left:779px;top:513px;color:#000a64;">A</div>
<div class="t" style="left:826px;top:513px;color:#000a64;">T</div>
<div class="t" style="left:873px;top:513px;color:#000a64;">T</div>
<div class="t" style="left:920px;top:513px;color:#000a64;">T</div>
<div class="t" style="left:173px;top:528px;color:#000a64;">T</div>
<div class="t" style="left:220px;top:528px;color:#000a64;">T</div>
<div class="t" style="left:266px;top:528px;color:#000a64;">A</div>
<div class="t" style="left:313px;top:528px;color:#000a64;">T</div>
<div class="t" style="left:359px;top:528px;color:#000a64;">A</div>
<div class="t" style="left:406px;top:528px;color:#000a64;">T</div>
<div class="t" style="left:452px;top:528px;color:#000a64;">G</div>
<div class="t" style="left:499px;top:528px;color:#000a64;">G</div>
<div class="t" style="left:546px;top:528px;color:#000a64;">C</div>
<div class="t" style="left:592px;top:528px;color:#000a64;">A</div>
<div class="t" style="left:639px;top:528px;color:#000a64;">C</div>
<div class="t" style="left:687px;top:528px;color:#8c8cb4;">T</div>
<div class="t" style="left:732px;top:528px;color:#000a64;">C</div>
<div class="t" style="left:779px;top:528px;color:#8c8cb4;">G</div>
<div class="t" style="left:826px;top:528px;color:#000a64;">T</div>
<div class="t" style="left:873px;top:528px;color:#000a64;">T</div>
<div class="t" style="left:920px;top:528px;color:#000a64;">T</div>
<div class="t" style="left:173px;top:543px;color:#000a64;">T</div>
<div class="t" style="left:220px;top:543px;color:#8c8cb4;">A</div>
<div class="t" style="left:266px;top:543px;color:#000a64;">A</div>
<div class="t" style="left:313px;top:543px;color:#000a64;">T</div>
<div class="t" style="left:359px;top:543px;color:#000a64;">A</div>
<div class="t" style="left:405px;top:543px;color:#8c8cb4;">G</div>
<div class="t" style="left:452px;top:543px;color:#000a64;">G</div>
<div class="t" style="left:500px;top:543px;color:#8c8cb4;">T</div>
<div class="t" style="left:546px;top:543px;color:#000a64;">C</div>
<div class="t" style="left:592px;top:543px;color:#000a64;">A</div>
<div class="t" style="left:639px;top:543px;color:#8c8cb4;">G</div>
<div class="t" style="left:686px;top:543px;color:#000a64;">C</div>
<div class="t" style="left:732px;top:543px;color:#000a64;">C</div>
<div class="t" style="left:779px;top:543px;color:#000a64;">A</div>
<div class="t" style="left:825px;top:543px;color:#8c8cb4;">G</div>
<div class="t" style="left:873px;top:543px;color:#000a64;">T</div>
<div class="t" style="left:920px;top:543px;color:#000a64;">T</div>
<div class="t" style="left:173px;top:558px;color:#000a64;">T</div>
<div class="t" style="left:220px;top:558px;color:#000a64;">T</div>
<div class="t" style="left:266px;top:558px;color:#000a64;">A</div>
<div class="t" style="left:313px;top:558px;color:#000a64;">T</div>
<div class="t" style="left:359px;top:558px;color:#000a64;">A</div>
<div class="t" style="left:406px;top:558px;color:#8c8cb4;">A</div>
<div class="t" style="left:452px;top:558px;color:#000a64;">G</div>
<div class="t" style="left:499px;top:558px;color:#000a64;">G</div>
<div class="t" style="left:546px;top:558px;color:#000a64;">C</div>
<div class="t" style="left:592px;top:558px;color:#000a64;">A</div>
<div class="t" style="left:639px;top:558px;color:#8c8cb4;">G</div>
<div class="t" style="left:687px;top:558px;color:#8c8cb4;">T</div>
<div class="t" style="left:732px;top:558px;color:#000a64;">C</div>
<div class="t" style="left:779px;top:558px;color:#000a64;">A</div>
<div class="t" style="left:826px;top:558px;color:#000a64;">T</div>
<div class="t" style="left:873px;top:558px;color:#000a64;">T</div>
<div class="t" style="left:920px;top:558px;color:#000a64;">T</div>
<div class="b" style="left:173px;top:580px;width:7px;height:1px;background:#8282b4"></div><div class="b" style="left:173px;top:583px;width:7px;height:1px;background:#8282b4"></div>
<div class="b" style="left:220px;top:580px;width:7px;height:1px;background:#8282b4"></div><div class="b" style="left:220px;top:583px;width:7px;height:1px;background:#8282b4"></div>
<div class="b" style="left:266px;top:580px;width:7px;height:1px;background:#8282b4"></div><div class="b" style="left:266px;top:583px;width:7px;height:1px;background:#8282b4"></div>
<div class="b" style="left:313px;top:580px;width:7px;height:1px;background:#8282b4"></div><div class="b" style="left:313px;top:583px;width:7px;height:1px;background:#8282b4"></div>
<div class="b" style="left:360px;top:580px;width:7px;height:1px;background:#8282b4"></div><div class="b" style="left:360px;top:583px;width:7px;height:1px;background:#8282b4"></div>
<div class="b" style="left:406px;top:580px;width:7px;height:1px;background:#8282b4"></div><div class="b" style="left:406px;top:583px;width:7px;height:1px;background:#8282b4"></div>
<div class="b" style="left:453px;top:580px;width:7px;height:1px;background:#8282b4"></div><div class="b" style="left:453px;top:583px;width:7px;height:1px;background:#8282b4"></div>
<div class="b" style="left:500px;top:580px;width:7px;height:1px;background:#8282b4"></div><div class="b" style="left:500px;top:583px;width:7px;height:1px;background:#8282b4"></div>
<div class="b" style="left:547px;top:580px;width:7px;height:1px;background:#8282b4"></div><div class="b" style="left:547px;top:583px;width:7px;height:1px;background:#8282b4"></div>
<div class="b" style="left:592px;top:580px;width:7px;height:1px;background:#8282b4"></div><div class="b" style="left:592px;top:583px;width:7px;height:1px;background:#8282b4"></div>
<div class="b" style="left:640px;top:580px;width:7px;height:1px;background:#8282b4"></div><div class="b" style="left:640px;top:583px;width:7px;height:1px;background:#8282b4"></div>
<div class="b" style="left:687px;top:580px;width:7px;height:1px;background:#8282b4"></div><div class="b" style="left:687px;top:583px;width:7px;height:1px;background:#8282b4"></div>
<div class="b" style="left:733px;top:580px;width:7px;height:1px;background:#8282b4"></div><div class="b" style="left:733px;top:583px;width:7px;height:1px;background:#8282b4"></div>
<div class="b" style="left:780px;top:580px;width:7px;height:1px;background:#8282b4"></div><div class="b" style="left:780px;top:583px;width:7px;height:1px;background:#8282b4"></div>
<div class="b" style="left:826px;top:580px;width:7px;height:1px;background:#8282b4"></div><div class="b" style="left:826px;top:583px;width:7px;height:1px;background:#8282b4"></div>
<div class="b" style="left:873px;top:580px;width:7px;height:1px;background:#8282b4"></div><div class="b" style="left:873px;top:583px;width:7px;height:1px;background:#8282b4"></div>
<div class="b" style="left:920px;top:580px;width:7px;height:1px;background:#8282b4"></div><div class="b" style="left:920px;top:583px;width:7px;height:1px;background:#8282b4"></div>
<div class="b" style="left:173px;top:595px;width:7px;height:1px;background:#8282b4"></div><div class="b" style="left:173px;top:598px;width:7px;height:1px;background:#8282b4"></div>
<div class="b" style="left:220px;top:595px;width:7px;height:1px;background:#8282b4"></div><div class="b" style="left:220px;top:598px;width:7px;height:1px;background:#8282b4"></div>
<div class="b" style="left:266px;top:595px;width:7px;height:1px;background:#8282b4"></div><div class="b" style="left:266px;top:598px;width:7px;height:1px;background:#8282b4"></div>
<div class="b" style="left:313px;top:595px;width:7px;height:1px;background:#8282b4"></div><div class="b" style="left:313px;top:598px;width:7px;height:1px;background:#8282b4"></div>
<div class="b" style="left:360px;top:595px;width:7px;height:1px;background:#8282b4"></div><div class="b" style="left:360px;top:598px;width:7px;height:1px;background:#8282b4"></div>
<div class="b" style="left:406px;top:595px;width:7px;height:1px;background:#8282b4"></div><div class="b" style="left:406px;top:598px;width:7px;height:1px;background:#8282b4"></div>
<div class="b" style="left:453px;top:595px;width:7px;height:1px;background:#8282b4"></div><div class="b" style="left:453px;top:598px;width:7px;height:1px;background:#8282b4"></div>
<div class="b" style="left:500px;top:595px;width:7px;height:1px;background:#8282b4"></div><div class="b" style="left:500px;top:598px;width:7px;height:1px;background:#8282b4"></div>
<div class="b" style="left:547px;top:595px;width:7px;height:1px;background:#8282b4"></div><div class="b" style="left:547px;top:598px;width:7px;height:1px;background:#8282b4"></div>
<div class="b" style="left:592px;top:595px;width:7px;height:1px;background:#8282b4"></div><div class="b" style="left:592px;top:598px;width:7px;height:1px;background:#8282b4"></div>
<div class="b" style="left:640px;top:595px;width:7px;height:1px;background:#8282b4"></div><div class="b" style="left:640px;top:598px;width:7px;height:1px;background:#8282b4"></div>
<div class="b" style="left:687px;top:595px;width:7px;height:1px;background:#8282b4"></div><div class="b" style="left:687px;top:598px;width:7px;height:1px;background:#8282b4"></div>
<div class="b" style="left:733px;top:595px;width:7px;height:1px;background:#8282b4"></div><div class="b" style="left:733px;top:598px;width:7px;height:1px;background:#8282b4"></div>
<div class="b" style="left:780px;top:595px;width:7px;height:1px;background:#8282b4"></div><div class="b" style="left:780px;top:598px;width:7px;height:1px;background:#8282b4"></div>
<div class="b" style="left:826px;top:595px;width:7px;height:1px;background:#8282b4"></div><div class="b" style="left:826px;top:598px;width:7px;height:1px;background:#8282b4"></div>
<div class="b" style="left:873px;top:595px;width:7px;height:1px;background:#8282b4"></div><div class="b" style="left:873px;top:598px;width:7px;height:1px;background:#8282b4"></div>
<div class="b" style="left:920px;top:595px;width:7px;height:1px;background:#8282b4"></div><div class="b" style="left:920px;top:598px;width:7px;height:1px;background:#8282b4"></div>
<div class="b" style="left:173px;top:610px;width:7px;height:1px;background:#8282b4"></div><div class="b" style="left:173px;top:613px;width:7px;height:1px;background:#8282b4"></div>
<div class="b" style="left:220px;top:610px;width:7px;height:1px;background:#8282b4"></div><div class="b" style="left:220px;top:613px;width:7px;height:1px;background:#8282b4"></div>
<div class="b" style="left:266px;top:610px;width:7px;height:1px;background:#8282b4"></div><div class="b" style="left:266px;top:613px;width:7px;height:1px;background:#8282b4"></div>
<div class="b" style="left:313px;top:610px;width:7px;height:1px;background:#8282b4"></div><div class="b" style="left:313px;top:613px;width:7px;height:1px;background:#8282b4"></div>
<div class="b" style="left:360px;top:610px;width:7px;height:1px;background:#8282b4"></div><div class="b" style="left:360px;top:613px;width:7px;height:1px;background:#8282b4"></div>
<div class="b" style="left:406px;top:610px;width:7px;height:1px;background:#8282b4"></div><div class="b" style="left:406px;top:613px;width:7px;height:1px;background:#8282b4"></div>
<div class="b" style="left:453px;top:610px;width:7px;height:1px;background:#8282b4"></div><div class="b" style="left:453px;top:613px;width:7px;height:1px;background:#8282b4"></div>
<div class="b" style="left:500px;top:610px;width:7px;height:1px;background:#8282b4"></div><div class="b" style="left:500px;top:613px;width:7px;height:1px;background:#8282b4"></div>
<div class="b" style="left:547px;top:610px;width:7px;height:1px;background:#8282b4"></div><div class="b" style="left:547px;top:613px;width:7px;height:1px;background:#8282b4"></div>
<div class="b" style="left:592px;top:610px;width:7px;height:1px;background:#8282b4"></div><div class="b" style="left:592px;top:613px;width:7px;height:1px;background:#8282b4"></div>
<div class="b" style="left:640px;top:610px;width:7px;height:1px;background:#8282b4"></div><div class="b" style="left:640px;top:613px;width:7px;height:1px;background:#8282b4"></div>
<div class="b" style="left:687px;top:610px;width:7px;height:1px;background:#8282b4"></div><div class="b" style="left:687px;top:613px;width:7px;height:1px;background:#8282b4"></div>
<div class="b" style="left:733px;top:610px;width:7px;height:1px;background:#8282b4"></div><div class="b" style="left:733px;top:613px;width:7px;height:1px;background:#8282b4"></div>
<div class="b" style="left:780px;top:610px;width:7px;height:1px;background:#8282b4"></div><div class="b" style="left:780px;top:613px;width:7px;height:1px;background:#8282b4"></div>
<div class="b" style="left:826px;top:610px;width:7px;height:1px;background:#8282b4"></div><div class="b" style="left:826px;top:613px;width:7px;height:1px;background:#8282b4"></div>
<div class="b" style="left:873px;top:610px;width:7px;height:1px;background:#8282b4"></div><div class="b" style="left:873px;top:613px;width:7px;height:1px;background:#8282b4"></div>
<div class="b" style="left:920px;top:610px;width:7px;height:1px;background:#8282b4"></div><div class="b" style="left:920px;top:613px;width:7px;height:1px;background:#8282b4"></div>
<div class="b" style="left:173px;top:625px;width:7px;height:1px;background:#8282b4"></div><div class="b" style="left:173px;top:628px;width:7px;height:1px;background:#8282b4"></div>
<div class="b" style="left:220px;top:625px;width:7px;height:1px;background:#8282b4"></div><div class="b" style="left:220px;top:628px;width:7px;height:1px;background:#8282b4"></div>
<div class="b" style="left:266px;top:625px;width:7px;height:1px;background:#8282b4"></div><div class="b" style="left:266px;top:628px;width:7px;height:1px;background:#8282b4"></div>
<div class="b" style="left:313px;top:625px;width:7px;height:1px;background:#8282b4"></div><div class="b" style="left:313px;top:628px;width:7px;height:1px;background:#8282b4"></div>
<div class="b" style="left:360px;top:625px;width:7px;height:1px;background:#8282b4"></div><div class="b" style="left:360px;top:628px;width:7px;height:1px;background:#8282b4"></div>
<div class="b" style="left:406px;top:625px;width:7px;height:1px;background:#8282b4"></div><div class="b" style="left:406px;top:628px;width:7px;height:1px;background:#8282b4"></div>
<div class="b" style="left:453px;top:625px;width:7px;height:1px;background:#8282b4"></div><div class="b" style="left:453px;top:628px;width:7px;height:1px;background:#8282b4"></div>
<div class="b" style="left:500px;top:625px;width:7px;height:1px;background:#8282b4"></div><div class="b" style="left:500px;top:628px;width:7px;height:1px;background:#8282b4"></div>
<div class="b" style="left:547px;top:625px;width:7px;height:1px;background:#8282b4"></div><div class="b" style="left:547px;top:628px;width:7px;height:1px;background:#8282b4"></div>
<div class="b" style="left:592px;top:625px;width:7px;height:1px;background:#8282b4"></div><div class="b" style="left:592px;top:628px;width:7px;height:1px;background:#8282b4"></div>
<div class="b" style="left:640px;top:625px;width:7px;height:1px;background:#8282b4"></div><div class="b" style="left:640px;top:628px;width:7px;height:1px;background:#8282b4"></div>
<div class="b" style="left:687px;top:625px;width:7px;height:1px;background:#8282b4"></div><div class="b" style="left:687px;top:628px;width:7px;height:1px;background:#8282b4"></div>
<div class="b" style="left:733px;top:625px;width:7px;height:1px;background:#8282b4"></div><div class="b" style="left:733px;top:628px;width:7px;height:1px;background:#8282b4"></div>
<div class="b" style="left:780px;top:625px;width:7px;height:1px;background:#8282b4"></div><div class="b" style="left:780px;top:628px;width:7px;height:1px;background:#8282b4"></div>
<div class="b" style="left:826px;top:625px;width:7px;height:1px;background:#8282b4"></div><div class="b" style="left:826px;top:628px;width:7px;height:1px;background:#8282b4"></div>
<div class="b" style="left:873px;top:625px;width:7px;height:1px;background:#8282b4"></div><div class="b" style="left:873px;top:628px;width:7px;height:1px;background:#8282b4"></div>
<div class="b" style="left:920px;top:625px;width:7px;height:1px;background:#8282b4"></div><div class="b" style="left:920px;top:628px;width:7px;height:1px;background:#8282b4"></div>
<div class="t" style="left:153.02px;width:800px;text-align:center;top:634px;color:#000;letter-spacing:0.04px;">Repeating Elements by RepeatMasker</div>
<div class="t" style="right:798.40px;top:648px;color:#000;">RepeatMasker</div>
<div class="b" style="left:156px;top:648px;width:793px;height:15px;background:#000"></div>
</body></html>
